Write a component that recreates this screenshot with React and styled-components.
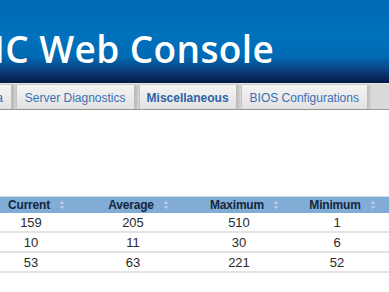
import React from "react";
import styled, { createGlobalStyle } from "styled-components";

const GlobalStyle = createGlobalStyle`
  html, body {
    margin: 0;
    padding: 0;
    background: #ffffff;
    font-family: "Liberation Sans", Arial, sans-serif;
  }
  #root {
    width: 389px;
    height: 292px;
    overflow: hidden;
  }
`;

const Page = styled.div`
  width: 389px;
  height: 292px;
  overflow: hidden;
  background: #ffffff;
  display: flex;
  flex-direction: column;
`;

const Banner = styled.header`
  height: 83px;
  box-sizing: border-box;
  padding-top: 29px;
  background: linear-gradient(
    to bottom,
    #006ab5 0%,
    #0071bd 45%,
    #006bb3 68%,
    #0a3f80 85%,
    #07214f 97%,
    #061a40 100%
  );
  display: flex;
  overflow: hidden;
  flex-shrink: 0;
`;

const Title = styled.h1`
  margin: 0 0 0 -54px;
  font-family: "Open Sans", "Liberation Sans", Arial, sans-serif;
  font-weight: 600;
  font-size: 37px;
  line-height: 40px;
  color: #ffffff;
  white-space: nowrap;
  letter-spacing: 0.4px;
`;

const TabBar = styled.nav`
  height: 27px;
  box-sizing: border-box;
  padding-top: 1px;
  display: flex;
  gap: 4px;
  margin-left: ${(p) => p.$offset}px;
  background: linear-gradient(to right, #cfcfcf, #dadada);
  border-top: 1px solid #e6e6e6;
  border-bottom: 1px solid #9a9a9a;
  box-shadow: 0 1px 0 #e2e2e2;
  flex-shrink: 0;
  white-space: nowrap;
`;

const Tab = styled.div`
  display: flex;
  align-items: center;
  padding: 1px ${(p) => (p.$active ? 7 : 8)}px 0;
  background: linear-gradient(to bottom, #f4f4f4, #e9e9e9 60%, #e2e2e2);
  border-left: 1px solid #c4c4c4;
  border-right: 1px solid #bdbdbd;
  box-shadow: 2px 0 2px rgba(0, 0, 0, 0.12);
  font-size: 12px;
  font-weight: ${(p) => (p.$active ? "bold" : "normal")};
  color: ${(p) => (p.$active ? "#2d62a6" : "#3b70b4")};
`;

const Content = styled.main`
  height: 86px;
  flex-shrink: 0;
  background: #ffffff;
`;

const Table = styled.div`
  margin-left: -14px;
  width: 420px;
  display: grid;
  grid-template-columns: 90px 114px 98px 98px 1fr;
`;

const HeadCell = styled.div`
  height: 16px;
  background: #80acd6;
  border-top: 1px solid #c9dcee;
  display: flex;
  align-items: center;
  justify-content: center;
  font-size: 12px;
  font-weight: bold;
  color: #15273d;
  letter-spacing: -0.2px;
`;

const HeadLabel = styled.span`
  position: relative;
  left: -2px;
`;

const SortIcon = styled.svg`
  position: absolute;
  left: calc(100% + 9px);
  top: 50%;
  margin-top: -5px;
  width: 6px;
  height: 10px;
`;

const Cell = styled.div`
  height: 18px;
  border-bottom: 2px solid #e3e3e3;
  display: flex;
  align-items: center;
  justify-content: center;
  font-size: 13px;
  color: #2a2a2a;
`;

const Sort = () => (
  <SortIcon viewBox="0 0 6 10">
    <polygon points="3,0.5 5.5,4 0.5,4" fill="#b3c9e2" />
    <polygon points="0.5,6 5.5,6 3,9.5" fill="#b3c9e2" />
  </SortIcon>
);

const tabs = [
  { label: "Virtual Media" },
  { label: "Server Diagnostics" },
  { label: "Miscellaneous", active: true },
  { label: "BIOS Configurations" },
];

const columns = ["Current", "Average", "Maximum", "Minimum"];

const rows = [
  [159, 205, 510, 1],
  [10, 11, 30, 6],
  [53, 63, 221, 52],
];

export default function App() {
  return (
    <Page>
      <GlobalStyle />
      <Banner>
        <Title>BMC Web Console</Title>
      </Banner>
      <TabBar $offset={-76}>
        {tabs.map((t) => (
          <Tab key={t.label} $active={t.active}>
            {t.label}
          </Tab>
        ))}
      </TabBar>
      <Content />
      <Table>
        {columns.map((c) => (
          <HeadCell key={c}>
            <HeadLabel>
              {c}
              <Sort />
            </HeadLabel>
          </HeadCell>
        ))}
        <HeadCell />
        {rows.map((r, i) => (
          <React.Fragment key={i}>
            {r.map((v, j) => (
              <Cell key={j}>{v}</Cell>
            ))}
            <Cell />
          </React.Fragment>
        ))}
      </Table>
    </Page>
  );
}
